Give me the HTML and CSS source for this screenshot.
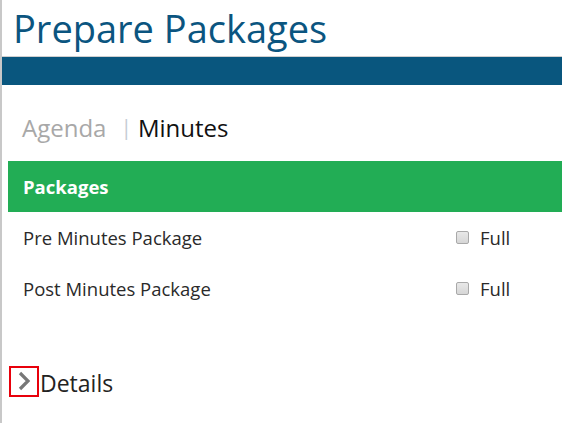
FILE: index.html
```html
<!DOCTYPE html>
<html lang="en">
<head>
    <meta charset="UTF-8">
    <meta name="viewport" content="width=device-width, initial-scale=1.0">
    <title>Prepare Packages</title>
    <link rel="stylesheet" href="styles.css">
</head>
<body>
    <div class="page">
        <h1 class="page-title">Prepare Packages</h1>
        <div class="title-bar"></div>

        <div class="tabs">
            <span class="tab">Agenda</span>
            <span class="tab-sep">|</span>
            <span class="tab active">Minutes</span>
        </div>

        <div class="packages">
            <div class="packages-head">Packages</div>
            <div class="package-row">
                <span class="package-name">Pre Minutes Package</span>
                <label class="package-opt"><input type="checkbox"> Full</label>
            </div>
            <div class="package-row">
                <span class="package-name">Post Minutes Package</span>
                <label class="package-opt"><input type="checkbox"> Full</label>
            </div>
        </div>

        <div class="details">
            <span class="details-toggle">
                <svg width="16" height="20" viewBox="0 0 16 20">
                    <path d="M4 2 L12 10 L4 18" fill="none" stroke="#777" stroke-width="3.2"/>
                </svg>
            </span>
            <span class="details-label">Details</span>
        </div>
    </div>
</body>
</html>
```

FILE: styles.css
```css
* {
    margin: 0;
    padding: 0;
    box-sizing: border-box;
}

body {
    font-family: "Open Sans", "DejaVu Sans", sans-serif;
    background: white;
    color: #333;
}

.page {
    min-height: 100vh;
    border-left: 2px solid #c8c8c8;
}

.page-title {
    font-size: 38px;
    font-weight: 400;
    color: #0b5580;
    line-height: 50px;
    padding: 3px 0 0 11px;
    border-bottom: 1px solid #cfcfcf;
    height: 57px;
}

.title-bar {
    height: 28px;
    background: #09567e;
}

.tabs {
    display: flex;
    align-items: flex-start;
    padding: 28px 0 0 20px;
    height: 76px;
    font-size: 24px;
    line-height: 30px;
}

.tab {
    color: #a8a8a8;
}

.tab.active {
    color: #111;
}

.tab-sep {
    color: #c5ccd4;
    font-size: 21px;
    margin: 0 6px 0 14px;
    position: relative;
    top: -1px;
}

.packages {
    margin-left: 6px;
}

.packages-head {
    height: 51px;
    background: #22ad55;
    color: white;
    font-weight: 700;
    font-size: 18.5px;
    line-height: 51px;
    padding-left: 15px;
}

.package-row {
    display: flex;
    align-items: center;
    height: 51px;
    padding-left: 15px;
    font-size: 18.5px;
    color: #2a2a2a;
}

.package-name {
    width: 433px;
}

.package-opt {
    display: flex;
    align-items: center;
    gap: 11px;
}

.package-opt input {
    appearance: none;
    width: 13px;
    height: 13px;
    border: 1px solid #a9a9a9;
    border-radius: 2px;
    background: linear-gradient(#e8e8e8, #d6d6d6);
}

.details {
    display: flex;
    align-items: center;
    margin-top: 51px;
    padding-left: 7px;
}

.details-toggle {
    display: flex;
    align-items: center;
    justify-content: center;
    width: 30px;
    height: 31px;
    border: 2px solid #e8000b;
}

.details-label {
    font-size: 23px;
    color: #222;
    margin-left: 1px;
    position: relative;
    top: 2px;
}
```
